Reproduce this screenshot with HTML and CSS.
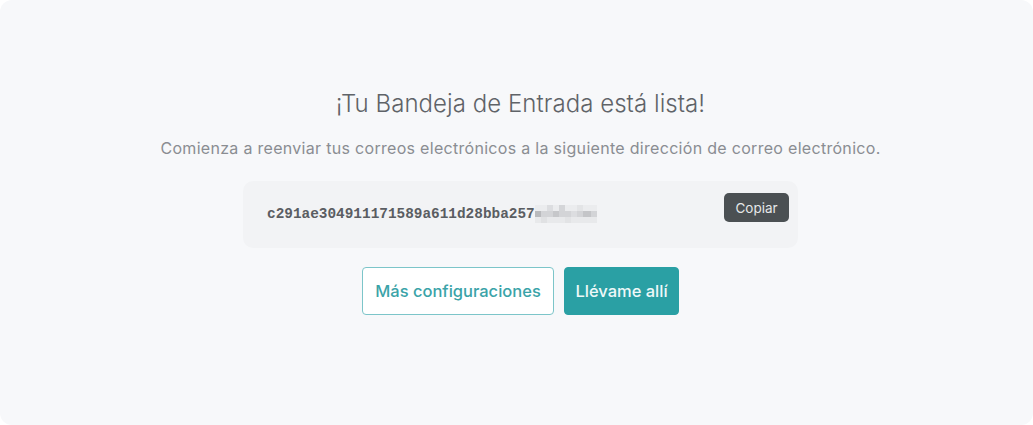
FILE: index.html
```html
<!DOCTYPE html>
<html lang="es">
<head>
    <meta charset="UTF-8">
    <meta name="viewport" content="width=device-width, initial-scale=1.0">
    <title>Bandeja de Entrada</title>
    <link rel="stylesheet" href="styles.css">
</head>
<body>
    <div class="panel">
        <h1>¡Tu Bandeja de Entrada está lista!</h1>
        <p class="lead">Comienza a reenviar tus correos electrónicos a la siguiente dirección de correo electrónico.</p>
        <div class="address-box">
            <div class="address">
                <span>c291ae304911171589a611d28bba257</span>
                <svg class="blur" width="62" height="18" viewBox="0 0 62 18">
                    <rect x="0" y="0" width="62" height="6" fill="#ebecee"/>
                    <rect x="12" y="0" width="6" height="6" fill="#dcdde0"/>
                    <rect x="24" y="0" width="6" height="6" fill="#d4d5d8"/>
                    <rect x="42" y="0" width="6" height="6" fill="#e3e4e6"/>
                    <rect x="0" y="6" width="62" height="6" fill="#d3d4d7"/>
                    <rect x="0" y="6" width="6" height="6" fill="#b9babd"/>
                    <rect x="18" y="6" width="6" height="6" fill="#c6c7ca"/>
                    <rect x="36" y="6" width="6" height="6" fill="#dcdde0"/>
                    <rect x="48" y="6" width="8" height="6" fill="#c4c5c8"/>
                    <rect x="0" y="12" width="62" height="6" fill="#e8e9eb"/>
                    <rect x="6" y="12" width="6" height="6" fill="#e0e1e3"/>
                    <rect x="30" y="12" width="6" height="6" fill="#e2e3e5"/>
                </svg>
            </div>
            <button class="copy-btn">Copiar</button>
        </div>
        <div class="actions">
            <button class="btn btn-outline">Más configuraciones</button>
            <button class="btn btn-primary">Llévame allí</button>
        </div>
    </div>
</body>
</html>
```

FILE: styles.css
```css
html, body {
    height: 100%;
}
body {
    margin: 0;
    background: white;
    font-family: Inter, "Noto Sans", sans-serif;
}
.panel {
    box-sizing: border-box;
    height: 100%;
    background-color: #f7f8fa;
    border-radius: 12px;
    padding: 88px 0 0 8px;
    display: flex;
    flex-direction: column;
    align-items: center;
}
h1 {
    margin: 0;
    font-size: 24px;
    font-weight: 300;
    line-height: 32px;
    color: #5f6368;
    letter-spacing: 0.05px;
}
.lead {
    margin: 17px 0 0;
    font-size: 16px;
    line-height: 22px;
    color: #8a8d92;
    letter-spacing: 0.3px;
}
.address-box {
    box-sizing: border-box;
    width: 555px;
    height: 67px;
    margin-top: 22px;
    background-color: #f2f3f5;
    border-radius: 10px;
    padding: 12px 9px 0 24px;
    display: flex;
    justify-content: space-between;
    align-items: flex-start;
}
.address {
    display: flex;
    align-items: center;
    margin-top: 12px;
    font-family: "Liberation Mono", monospace;
    font-size: 14.4px;
    font-weight: bold;
    color: #5a5d62;
}
.blur {
    display: block;
}
.copy-btn {
    background-color: #4b5053;
    color: #e6e7e8;
    border: none;
    border-radius: 5px;
    width: 65px;
    height: 29px;
    font-family: Inter, sans-serif;
    font-size: 13.5px;
    cursor: pointer;
}
.actions {
    display: flex;
    gap: 10px;
    margin-top: 19px;
}
.btn {
    height: 48px;
    padding: 0;
    border-radius: 4px;
    font-family: Inter, sans-serif;
    font-size: 16.5px;
    font-weight: 500;
    white-space: nowrap;
    cursor: pointer;
}
.btn-outline {
    width: 192px;
    background: white;
    color: #3aa3a8;
    border: 1px solid #7cc5c9;
}
.btn-primary {
    width: 115px;
    background-color: #2aa0a4;
    color: #eef8f8;
    border: 1px solid #2aa0a4;
}
```
